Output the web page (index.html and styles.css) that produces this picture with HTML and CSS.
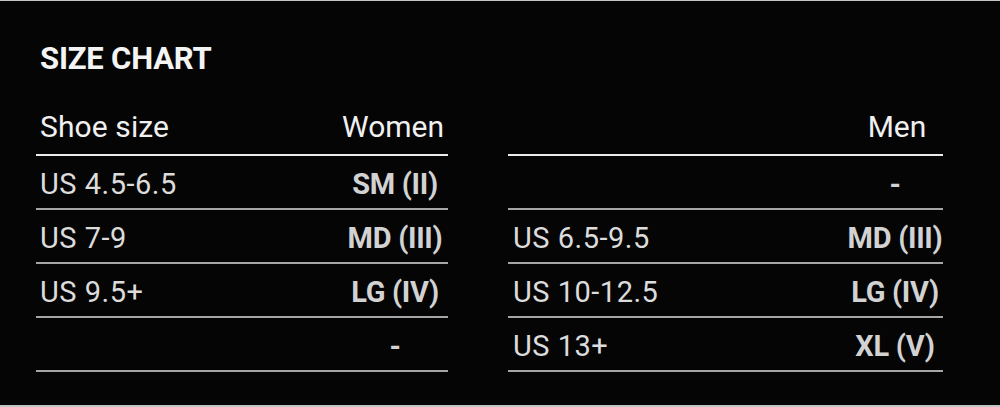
FILE: index.html
```html
<!DOCTYPE html>
<html lang="en">
<head>
<meta charset="utf-8">
<title>Size Chart</title>
<link rel="stylesheet" href="styles.css">
</head>
<body>
<div class="page">
  <h1 class="title">SIZE CHART</h1>
  <div class="tables">
    <table class="chart chart-women">
      <thead>
        <tr><th class="size">Shoe size</th><th class="fit">Women</th></tr>
      </thead>
      <tbody>
        <tr><td class="size">US 4.5-6.5</td><td class="fit">SM (II)</td></tr>
        <tr><td class="size">US 7-9</td><td class="fit">MD (III)</td></tr>
        <tr><td class="size">US 9.5+</td><td class="fit">LG (IV)</td></tr>
        <tr><td class="size"></td><td class="fit">-</td></tr>
      </tbody>
    </table>
    <table class="chart chart-men">
      <thead>
        <tr><th class="size"></th><th class="fit">Men</th></tr>
      </thead>
      <tbody>
        <tr><td class="size"></td><td class="fit">-</td></tr>
        <tr><td class="size">US 6.5-9.5</td><td class="fit">MD (III)</td></tr>
        <tr><td class="size">US 10-12.5</td><td class="fit">LG (IV)</td></tr>
        <tr><td class="size">US 13+</td><td class="fit">XL (V)</td></tr>
      </tbody>
    </table>
  </div>
</div>
</body>
</html>
```

FILE: styles.css
```css
html, body {
  margin: 0;
  padding: 0;
  background: #050505;
}

.page {
  box-sizing: border-box;
  height: 407px;
  border-top: 1px solid #c4c4c4;
  border-bottom: 2px solid #c4c4c4;
  background: #050505;
  padding: 40px 57px 0 36px;
  font-family: Roboto, "Liberation Sans", sans-serif;
  color: #dcdcdc;
}

.title {
  margin: 0 0 32px 4px;
  font-size: 31px;
  line-height: 36px;
  font-weight: 700;
  color: #f4f4f4;
  letter-spacing: -0.2px;
}

.tables {
  display: grid;
  grid-template-columns: 412px 1fr;
  column-gap: 60px;
}

.chart {
  width: 100%;
  border-collapse: collapse;
  table-layout: fixed;
}

.chart th {
  font-size: 30px;
  line-height: 36px;
  font-weight: 400;
  color: #f0f0f0;
  padding: 0 0 9px 0;
  border-bottom: 2px solid #ececec;
  vertical-align: top;
  letter-spacing: 0.1px;
}

.chart td {
  font-size: 29px;
  line-height: 44px;
  height: 44px;
  padding: 6px 0 2px 0;
  border-bottom: 2px solid #a6a6a6;
  vertical-align: top;
}

.chart .size {
  text-align: left;
  padding-left: 4px;
}

.chart td.size {
  letter-spacing: 0.5px;
}

.chart .fit {
  box-sizing: border-box;
  text-align: center;
  width: 106px;
}

.chart th.fit {
  letter-spacing: 0;
  padding-right: 6px;
}

.chart-men .fit {
  width: 96px;
}

.chart-men th.fit {
  padding-right: 0;
  padding-left: 4px;
}

.chart-men .size {
  padding-left: 5px;
}

.chart td.fit {
  font-weight: 700;
  color: #d2d2d2;
  letter-spacing: -0.3px;
}
```
